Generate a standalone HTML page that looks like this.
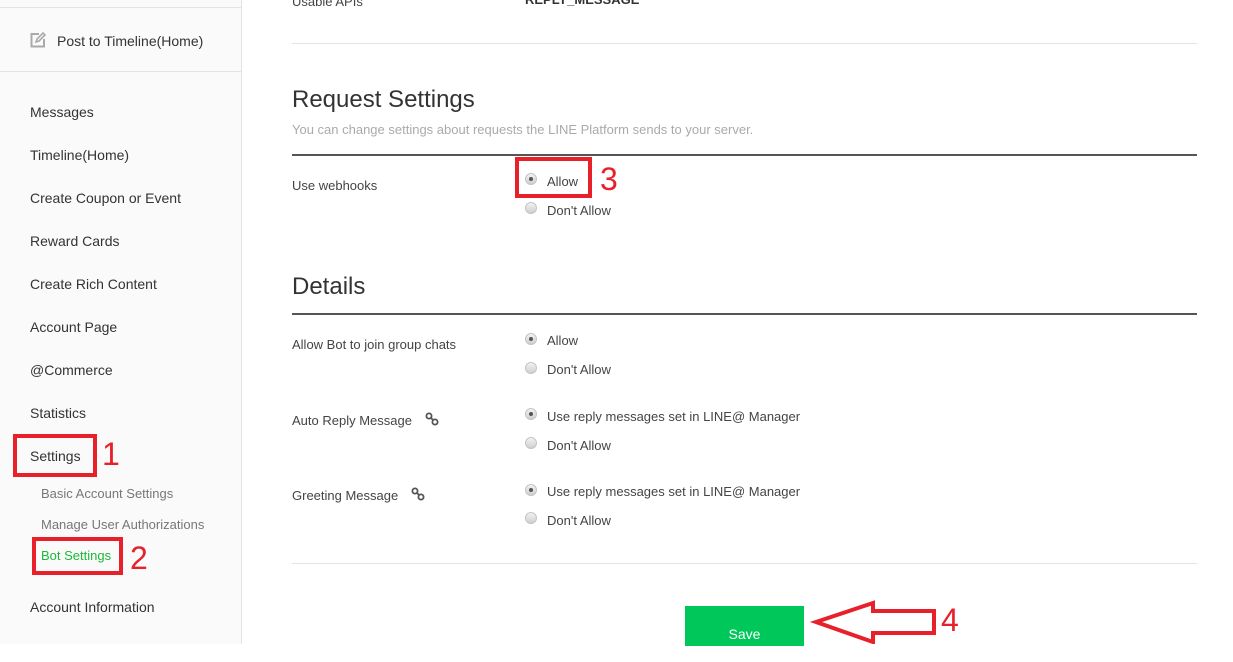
<!DOCTYPE html>
<html><head><meta charset="utf-8"><style>
body{margin:0;width:1233px;height:644px;overflow:hidden;background:#fff;font-family:"Liberation Sans",sans-serif;position:relative;color:#333}
.a{position:absolute;white-space:nowrap}
.side{position:absolute;left:0;top:0;width:241px;height:644px;background:#fafafa;border-right:1px solid #e3e3e3}
.nav{font-size:14px;color:#333;left:30px}
.sub{font-size:13px;color:#777;left:41px}
.hl{position:absolute;height:1px;background:#e3e3e3}
.r{position:absolute;width:12px;height:12px;border-radius:50%;background:linear-gradient(#f2f2f2,#cfcfcf);border:1px solid #c4c4c4;box-sizing:border-box}
.r.on::after{content:"";position:absolute;left:3px;top:3px;width:4px;height:4px;border-radius:50%;background:#555}
.lbl{font-size:13px;color:#444}
.box{position:absolute;border:4px solid #e8202a;box-sizing:border-box}
.num{position:absolute;color:#e8202a;font-size:32px}
h2{position:absolute;margin:0;font-weight:normal;font-size:24px;color:#333;left:292px}
.thick{position:absolute;left:292px;width:905px;height:2px;background:#555}
</style></head><body>
<div class="side"></div>
<div class="hl" style="left:0;top:7px;width:241px"></div>
<div class="hl" style="left:0;top:71px;width:241px"></div>
<svg class="a" style="left:30px;top:32px" width="16" height="16" viewBox="0 0 16 16"><path d="M9 2H1.5v12.5H14V7" fill="none" stroke="#aaa" stroke-width="2"/><path d="M6 10l1-3 6-6 2 2-6 6z" fill="none" stroke="#aaa" stroke-width="1.6"/></svg>
<div class="a nav" style="left:57px;top:33px">Post to Timeline(Home)</div>
<div class="a nav" style="top:104px">Messages</div>
<div class="a nav" style="top:147px">Timeline(Home)</div>
<div class="a nav" style="top:190px">Create Coupon or Event</div>
<div class="a nav" style="top:233px">Reward Cards</div>
<div class="a nav" style="top:276px">Create Rich Content</div>
<div class="a nav" style="top:319px">Account Page</div>
<div class="a nav" style="top:362px">@Commerce</div>
<div class="a nav" style="top:405px">Statistics</div>
<div class="a nav" style="top:448px">Settings</div>
<div class="a sub" style="top:486px">Basic Account Settings</div>
<div class="a sub" style="top:517px">Manage User Authorizations</div>
<div class="a sub" style="top:548px;color:#1db83a">Bot Settings</div>
<div class="a nav" style="top:599px">Account Information</div>
<div class="box" style="left:13px;top:434px;width:84px;height:43px"></div>
<div class="num" style="left:102px;top:436px">1</div>
<div class="box" style="left:32px;top:537px;width:91px;height:38px"></div>
<div class="num" style="left:130px;top:540px">2</div>

<div class="a lbl" style="left:292px;top:-6px">Usable APIs</div>
<div class="a" style="left:525px;top:-8px;font-size:13px;font-weight:bold">REPLY_MESSAGE</div>
<div class="hl" style="left:292px;top:43px;width:905px"></div>
<h2 style="top:86px">Request Settings</h2>
<div class="a" style="left:292px;top:122px;font-size:13px;color:#aaa">You can change settings about requests the LINE Platform sends to your server.</div>
<div class="thick" style="top:154px"></div>
<div class="a lbl" style="left:292px;top:178px">Use webhooks</div>
<div class="r on" style="left:525px;top:173px"></div><div class="a lbl" style="left:547px;top:174px">Allow</div>
<div class="r" style="left:525px;top:202px"></div><div class="a lbl" style="left:547px;top:203px">Don't Allow</div>
<div class="box" style="left:515px;top:157px;width:77px;height:41px"></div>
<div class="num" style="left:600px;top:161px">3</div>

<h2 style="top:273px">Details</h2>
<div class="thick" style="top:313px"></div>
<div class="a lbl" style="left:292px;top:337px">Allow Bot to join group chats</div>
<div class="r on" style="left:525px;top:333px"></div><div class="a lbl" style="left:547px;top:333px">Allow</div>
<div class="r" style="left:525px;top:362px"></div><div class="a lbl" style="left:547px;top:362px">Don't Allow</div>
<div class="a lbl" style="left:292px;top:413px">Auto Reply Message</div>
<svg class="a" style="left:425px;top:412px" width="14" height="14" viewBox="0 0 14 14"><circle cx="4" cy="4" r="2.6" fill="none" stroke="#555" stroke-width="1.8"/><circle cx="10" cy="10" r="2.6" fill="none" stroke="#555" stroke-width="1.8"/><path d="M5.5 5.5L8.5 8.5" stroke="#555" stroke-width="1.8"/></svg>
<div class="r on" style="left:525px;top:408px"></div><div class="a lbl" style="left:547px;top:409px">Use reply messages set in LINE@ Manager</div>
<div class="r" style="left:525px;top:437px"></div><div class="a lbl" style="left:547px;top:438px">Don't Allow</div>
<div class="a lbl" style="left:292px;top:488px">Greeting Message</div>
<svg class="a" style="left:411px;top:487px" width="14" height="14" viewBox="0 0 14 14"><circle cx="4" cy="4" r="2.6" fill="none" stroke="#555" stroke-width="1.8"/><circle cx="10" cy="10" r="2.6" fill="none" stroke="#555" stroke-width="1.8"/><path d="M5.5 5.5L8.5 8.5" stroke="#555" stroke-width="1.8"/></svg>
<div class="r on" style="left:525px;top:484px"></div><div class="a lbl" style="left:547px;top:484px">Use reply messages set in LINE@ Manager</div>
<div class="r" style="left:525px;top:512px"></div><div class="a lbl" style="left:547px;top:513px">Don't Allow</div>
<div class="hl" style="left:292px;top:563px;width:905px"></div>

<div class="a" style="left:685px;top:606px;width:119px;height:40px;background:#00c759;color:#fff;font-size:14px;text-align:center;line-height:56px">Save</div>
<svg class="a" style="left:810px;top:598px" width="130" height="46"><path d="M6 24L63 5V13H124V35H63V44Z" fill="#fff" stroke="#e8202a" stroke-width="4"/></svg>
<div class="num" style="left:941px;top:602px">4</div>
</body></html>
